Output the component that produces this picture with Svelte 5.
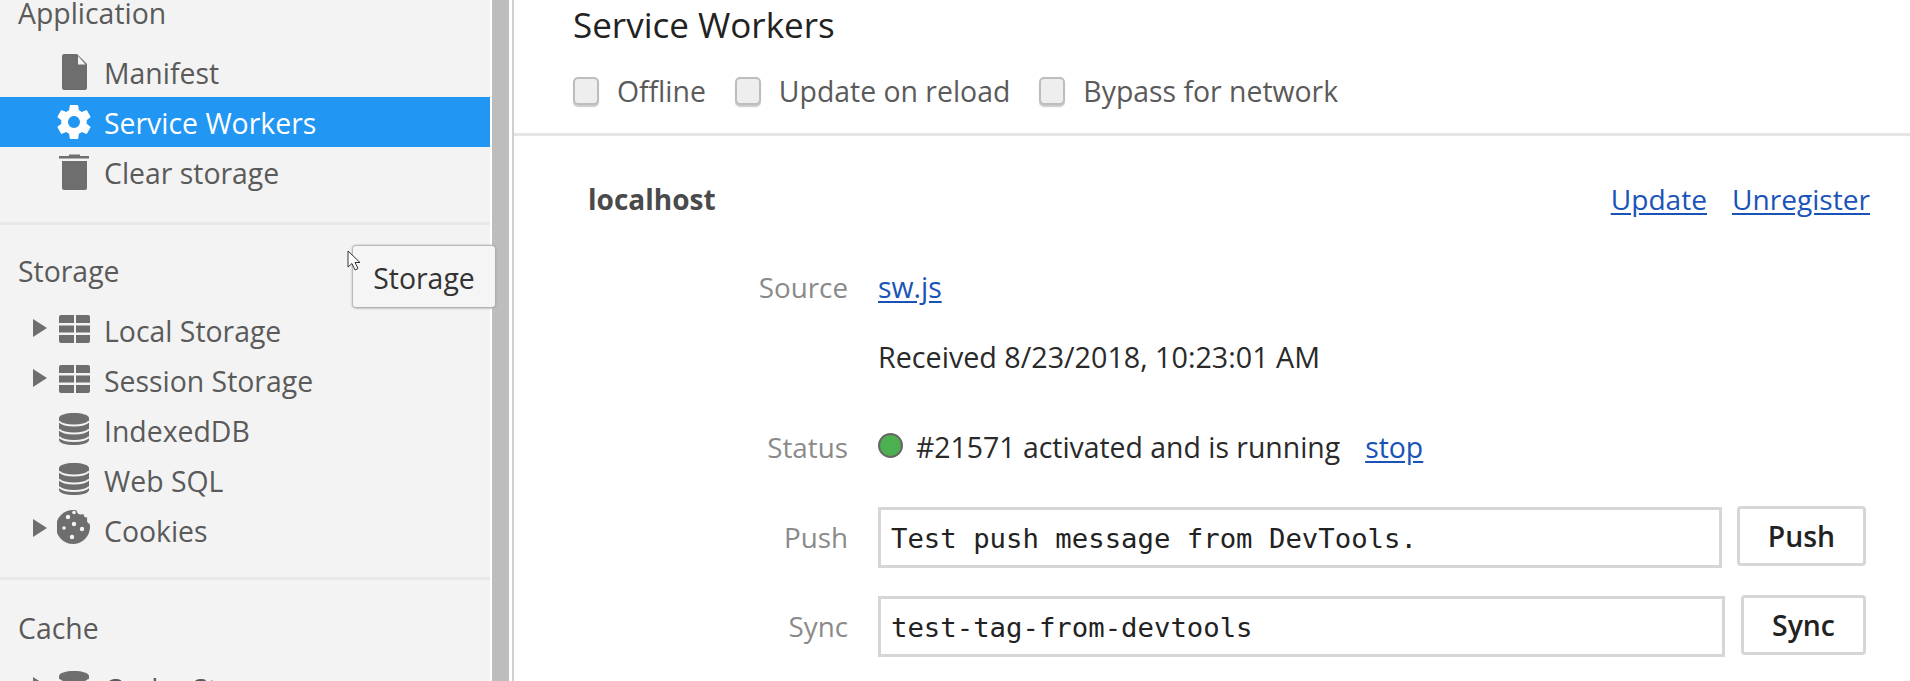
<script>
  const gear = "M19.43 12.98c.04-.32.07-.64.07-.98s-.03-.66-.07-.98l2.11-1.65c.19-.15.24-.42.12-.64l-2-3.46c-.12-.22-.39-.3-.61-.22l-2.49 1c-.52-.4-1.08-.73-1.69-.98l-.38-2.65C14.46 2.18 14.25 2 14 2h-4c-.25 0-.46.18-.49.42l-.38 2.65c-.61.25-1.17.59-1.69.98l-2.49-1c-.23-.09-.49 0-.61.22l-2 3.46c-.13.22-.07.49.12.64l2.11 1.65c-.04.32-.07.65-.07.98s.03.66.07.98l-2.11 1.65c-.19.15-.24.42-.12.64l2 3.46c.12.22.39.3.61.22l2.49-1c.52.4 1.08.73 1.69.98l.38 2.65c.03.24.24.42.49.42h4c.25 0 .46-.18.49-.42l.38-2.65c.61-.25 1.17-.59 1.69-.98l2.49 1c.23.09.49 0 .61-.22l2-3.46c.12-.22.07-.49-.12-.64l-2.11-1.65zM12 15.5c-1.93 0-3.5-1.57-3.5-3.5s1.57-3.5 3.5-3.5 3.5 1.57 3.5 3.5-1.57 3.5-3.5 3.5z";
</script>

{#snippet arrow(show)}
  <span class="arrow">
    {#if show}
      <svg width="14" height="18" viewBox="0 0 14 18"><polygon points="0,0 14,9 0,18" fill="#6e6e6e" /></svg>
    {/if}
  </span>
{/snippet}

{#snippet tableIcon()}
  <svg class="ico" width="34" height="50" viewBox="0 0 34 50" fill="#6e6e6e">
    <path d="M2 12a2 2 0 0 1 2-2H17V18H2zM19 10H31a2 2 0 0 1 2 2V18H19zM2 20.500H17V27.500H2zM19 20.500H33V27.500H19zM2 30H17V38H4a2 2 0 0 1-2-2zM19 30H33V36a2 2 0 0 1-2 2H19z" />
  </svg>
{/snippet}

{#snippet dbIcon()}
  <svg class="ico" width="34" height="50" viewBox="0 0 34 50">
    <path d="M2 13c0-3 7-5 15-5s15 2 15 5v22c0 3-7 5-15 5s-15-2-15-5z" fill="#6e6e6e" />
    <path d="M2 16.500c3 3 9 4 15 4s12-1 15-4M2 24.500c3 3 9 4 15 4s12-1 15-4M2 32c3 3 9 4 15 4s12-1 15-4" fill="none" stroke="#f3f3f3" stroke-width="1.800" />
  </svg>
{/snippet}

<div class="app">
  <aside class="side">
    <div class="heading first">Application</div>
    <div class="row">
      {@render arrow(false)}
      <svg class="ico" width="34" height="50" viewBox="0 0 34 50">
        <path d="M7 7H20L30 17V41a2 2 0 0 1-2 2H7a2 2 0 0 1-2-2V9a2 2 0 0 1 2-2z" fill="#6e6e6e" />
        <path d="M21 9L28.500 17.500H21z" fill="#f3f3f3" />
      </svg>
      <span>Manifest</span>
    </div>
    <div class="row sel">
      {@render arrow(false)}
      <svg class="ico" width="34" height="50" viewBox="0 0 34 50">
        <path transform="translate(17 25) scale(1.7) translate(-12 -12)" d={gear} fill="#fff" />
      </svg>
      <span>Service Workers</span>
    </div>
    <div class="row">
      {@render arrow(false)}
      <svg class="ico" width="34" height="50" viewBox="0 0 34 50" fill="#6e6e6e">
        <path d="M2 9H12V7.500H23V9H32V11.500H2zM5 14H30V41a2 2 0 0 1-2 2H7a2 2 0 0 1-2-2z" />
      </svg>
      <span>Clear storage</span>
    </div>
    <div class="sep s1"></div>
    <div class="heading h2">Storage</div>
    <div class="row">{@render arrow(true)}{@render tableIcon()}<span>Local Storage</span></div>
    <div class="row">{@render arrow(true)}{@render tableIcon()}<span>Session Storage</span></div>
    <div class="row">{@render arrow(false)}{@render dbIcon()}<span>IndexedDB</span></div>
    <div class="row">{@render arrow(false)}{@render dbIcon()}<span>Web SQL</span></div>
    <div class="row">
      {@render arrow(true)}
      <svg class="ico" width="34" height="50" viewBox="0 0 34 50">
        <circle cx="16" cy="22" r="17" fill="#6e6e6e" />
        <g fill="#f3f3f3">
          <circle cx="24" cy="5" r="4.500" /><circle cx="30" cy="9" r="3.500" /><circle cx="34" cy="15" r="4" />
          <circle cx="11" cy="12" r="2.200" /><circle cx="17" cy="7.500" r="1.800" /><circle cx="17" cy="19" r="2.200" />
          <circle cx="7" cy="23" r="1.800" /><circle cx="25" cy="24" r="2.200" /><circle cx="15" cy="32" r="2.200" />
        </g>
      </svg>
      <span>Cookies</span>
    </div>
    <div class="sep s2"></div>
    <div class="heading h3">Cache</div>
    <div class="row">{@render arrow(true)}{@render dbIcon()}<span>Cache Storage</span></div>

    <div class="tip">Storage</div>
    <svg class="cursor" width="14" height="22" viewBox="0 0 14 22">
      <path d="M1 1V17L5 13.500L8 20L11 18.500L8 12.500H13z" fill="#fff" stroke="#333" stroke-width="1" />
    </svg>
  </aside>
  <div class="gutter"></div>
  <main class="main">
    <header class="head">
      <h1>Service Workers</h1>
      <div class="opts">
        <label><i class="cb"></i>Offline</label>
        <label><i class="cb"></i>Update on reload</label>
        <label><i class="cb"></i>Bypass for network</label>
      </div>
    </header>
    <section class="sec">
      <div class="top">
        <b>localhost</b>
        <div class="links"><a href="#u">Update</a><a href="#r">Unregister</a></div>
      </div>
      <div class="f src"><span class="k">Source</span><a href="#s">sw.js</a></div>
      <div class="f rec"><span class="k"></span><span class="when">Received 8/23/2018, 10:23:01 AM</span></div>
      <div class="f sta"><span class="k">Status</span><span class="val"><i class="dot"></i>#21571 activated and is running<a class="stop" href="#t">stop</a></span></div>
      <div class="f inp"><span class="k">Push</span><div class="box">Test push message from DevTools.</div><div class="btn">Push</div></div>
      <div class="f inp sy"><span class="k">Sync</span><div class="box">test-tag-from-devtools</div><div class="btn">Sync</div></div>
    </section>
  </main>
</div>

<style>
  :global(body) { margin: 0; background: #fff; }
  .app {
    display: flex; width: 1910px; height: 681px; overflow: hidden;
    font-family: "Open Sans", "Noto Sans", sans-serif; font-size: 28.400px; color: #303030;
  }
  .side { position: relative; width: 490px; height: 681px; background: #f3f3f3; color: #5a5a5a; flex: none; }
  .heading { height: 50px; line-height: 50px; padding-left: 18px; }
  .heading.first { height: 47px; line-height: 27px; }
  .h2 { margin-bottom: 10px; line-height: 52px; }
  .h3 { margin-top: 23px; margin-bottom: 10px; }
  .row { display: flex; align-items: center; height: 50px; padding-left: 33px; }
  .row > span:last-child { margin-top: 2px; }
  .row.sel { background: #2196f3; color: #fff; }
  .arrow { width: 14px; height: 18px; margin-right: 10px; margin-top: -5px; flex: none; }
  .arrow svg { display: block; }
  .ico { flex: none; margin-right: 13px; }
  .sep { height: 3px; background: #e8e8e8; }
  .s1 { margin-top: 25px; margin-bottom: 20px; }
  .s2 { margin-top: 22px; }
  .tip {
    position: absolute; left: 353px; top: 246px; width: 142px; height: 61px; box-sizing: border-box;
    background: #f5f5f5; color: #333; border-radius: 3px; line-height: 64px; text-align: center;
    box-shadow: 0 0 2px 1px #a8a8a8, 1px 1px 3px #bbb; z-index: 2;
  }
  .cursor { position: absolute; left: 347px; top: 250px; z-index: 3; }
  .gutter { flex: none; margin-left: 2px; background: #bdbdbd; border-right: 3px solid #fff; width: 17px; }
  .main { flex: 1; border-left: 2px solid #d0d0d0; min-width: 0; }
  .head { height: 136px; box-sizing: border-box; padding-left: 59px; border-bottom: 3px solid #e5e5e5; }
  h1 { margin: 0; height: 50px; font-size: 35px; font-weight: 400; line-height: 49px; color: #222; }
  .opts { display: flex; gap: 29px; color: #5a5a5a; margin-top: 26px; height: 30px; }
  .opts label { display: flex; align-items: center; }
  .cb {
    width: 26px; height: 28px; box-sizing: border-box; margin-right: 18px; border-radius: 5px;
    background: #eee; border: 2px solid #bdbdbd; box-shadow: 0 2px 1px #ccc;
  }
  .top {
    display: flex; justify-content: space-between; align-items: center;
    height: 60px; margin-top: 33px; padding: 0 40px 0 74px;
  }
  .top b { font-weight: 700; color: #4a4a4a; font-size: 28px; }
  .links { display: flex; gap: 25px; font-size: 28.100px; }
  a { color: #1a53b8; text-decoration: underline; text-underline-offset: 3px; }
  .f { display: flex; align-items: center; }
  .k { width: 334px; margin-right: 30px; text-align: right; color: #8a8a8a; flex: none; font-size: 27.800px; }
  .src { height: 50px; margin-top: 33px; }
  .rec { height: 50px; margin-top: 19px; color: #2a2a2a; }
  .when { font-size: 28.700px; }
  .sta { height: 50px; margin-top: 41px; color: #2a2a2a; }
  .val { display: flex; align-items: center; }
  .dot { width: 25px; height: 25px; box-sizing: border-box; border-radius: 50%; background: #4caf50; border: 2px solid #666; margin-right: 13px; margin-top: -3px; }
  .stop { margin-left: 25px; }
  .inp { height: 62px; margin-top: 34px; padding-right: 44px; }
  .inp.sy { margin-top: 27px; }
  .box {
    flex: 1; height: 61px; box-sizing: border-box; border: 3px solid #d6d6d6; padding-left: 10px;
    font-family: "DejaVu Sans Mono", "Liberation Mono", monospace; font-size: 27.300px; line-height: 58px; color: #222;
  }
  .btn {
    width: 129px; height: 60px; box-sizing: border-box; margin-left: 15px; border: 3px solid #d6d6d6; border-radius: 4px;
    text-align: center; line-height: 55px; color: #222; font-weight: 600; margin-top: -2px; background: #fff;
  }
  .sy .btn { width: 125px; margin-left: 16px; }
</style>
